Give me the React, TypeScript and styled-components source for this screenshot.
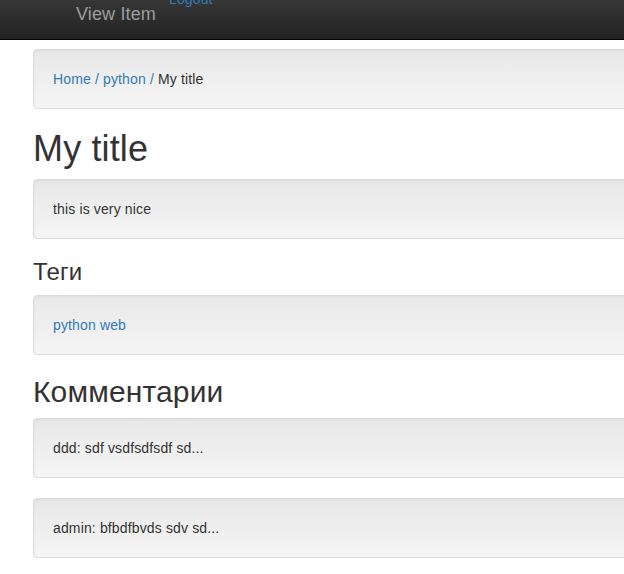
import React from "react";
import styled, { createGlobalStyle } from "styled-components";

const GlobalStyle = createGlobalStyle`
  html, body {
    margin: 0;
    padding: 0;
    overflow: hidden;
    background: #fff;
  }
  body {
    font-family: "Liberation Sans", Arial, sans-serif;
    font-size: 14px;
    line-height: 20px;
    letter-spacing: 0.01em;
    color: #333;
  }
`;

const Page = styled.div`
  width: 624px;
  overflow: hidden;
`;

const Navbar = styled.nav`
  display: flex;
  align-items: flex-start;
  height: 39px;
  padding-left: 76px;
  background: linear-gradient(to bottom, #373737 0%, #222 100%);
  border-bottom: 1px solid #080808;
`;

const Brand = styled.a`
  margin-top: 4px;
  font-size: 18px;
  line-height: 20px;
  color: #9d9d9d;
  text-decoration: none;
`;

const NavLink = styled.a`
  margin-top: -11px;
  margin-left: 13px;
  font-size: 14px;
  line-height: 20px;
  color: #337ab7;
  text-decoration: none;
`;

const Container = styled.main`
  width: 1140px;
  padding: 9px 0 0 33px;
`;

const Well = styled.div`
  min-height: 20px;
  padding: 19px;
  margin-bottom: 20px;
  border: 1px solid #dcdcdc;
  border-radius: 4px;
  background-image: linear-gradient(to bottom, #e8e8e8 0%, #f5f5f5 100%);
  box-shadow: inset 0 1px 3px rgba(0, 0, 0, 0.05), 0 1px 0 rgba(255, 255, 255, 0.1);
`;

const Link = styled.a`
  color: #337ab7;
  text-decoration: none;
`;

const Current = styled.span`
  color: #333;
`;

const Heading = styled.h1<{ $size: number }>`
  margin: 20px 0 10px;
  font-family: "Liberation Sans", Arial, sans-serif;
  font-weight: 500;
  font-size: ${(p) => p.$size}px;
  line-height: 1.1;
  color: #333;
`;

const comments = [
  { author: "ddd", text: "sdf vsdfsdfsdf sd..." },
  { author: "admin", text: "bfbdfbvds sdv sd..." },
];

export default function App() {
  return (
    <>
      <GlobalStyle />
      <Page>
        <Navbar>
          <Brand href="#">View Item</Brand>
          <NavLink href="#">Logout</NavLink>
        </Navbar>
        <Container>
          <Well>
            <Link href="#">Home /</Link> <Link href="#">python /</Link>{" "}
            <Current>My title</Current>
          </Well>
          <Heading $size={36}>My title</Heading>
          <Well>this is very nice</Well>
          <Heading as="h3" $size={24}>
            Теги
          </Heading>
          <Well>
            <Link href="#">python web</Link>
          </Well>
          <Heading as="h2" $size={30}>
            Комментарии
          </Heading>
          {comments.map((c) => (
            <Well key={c.author}>
              {c.author}: {c.text}
            </Well>
          ))}
        </Container>
      </Page>
    </>
  );
}
